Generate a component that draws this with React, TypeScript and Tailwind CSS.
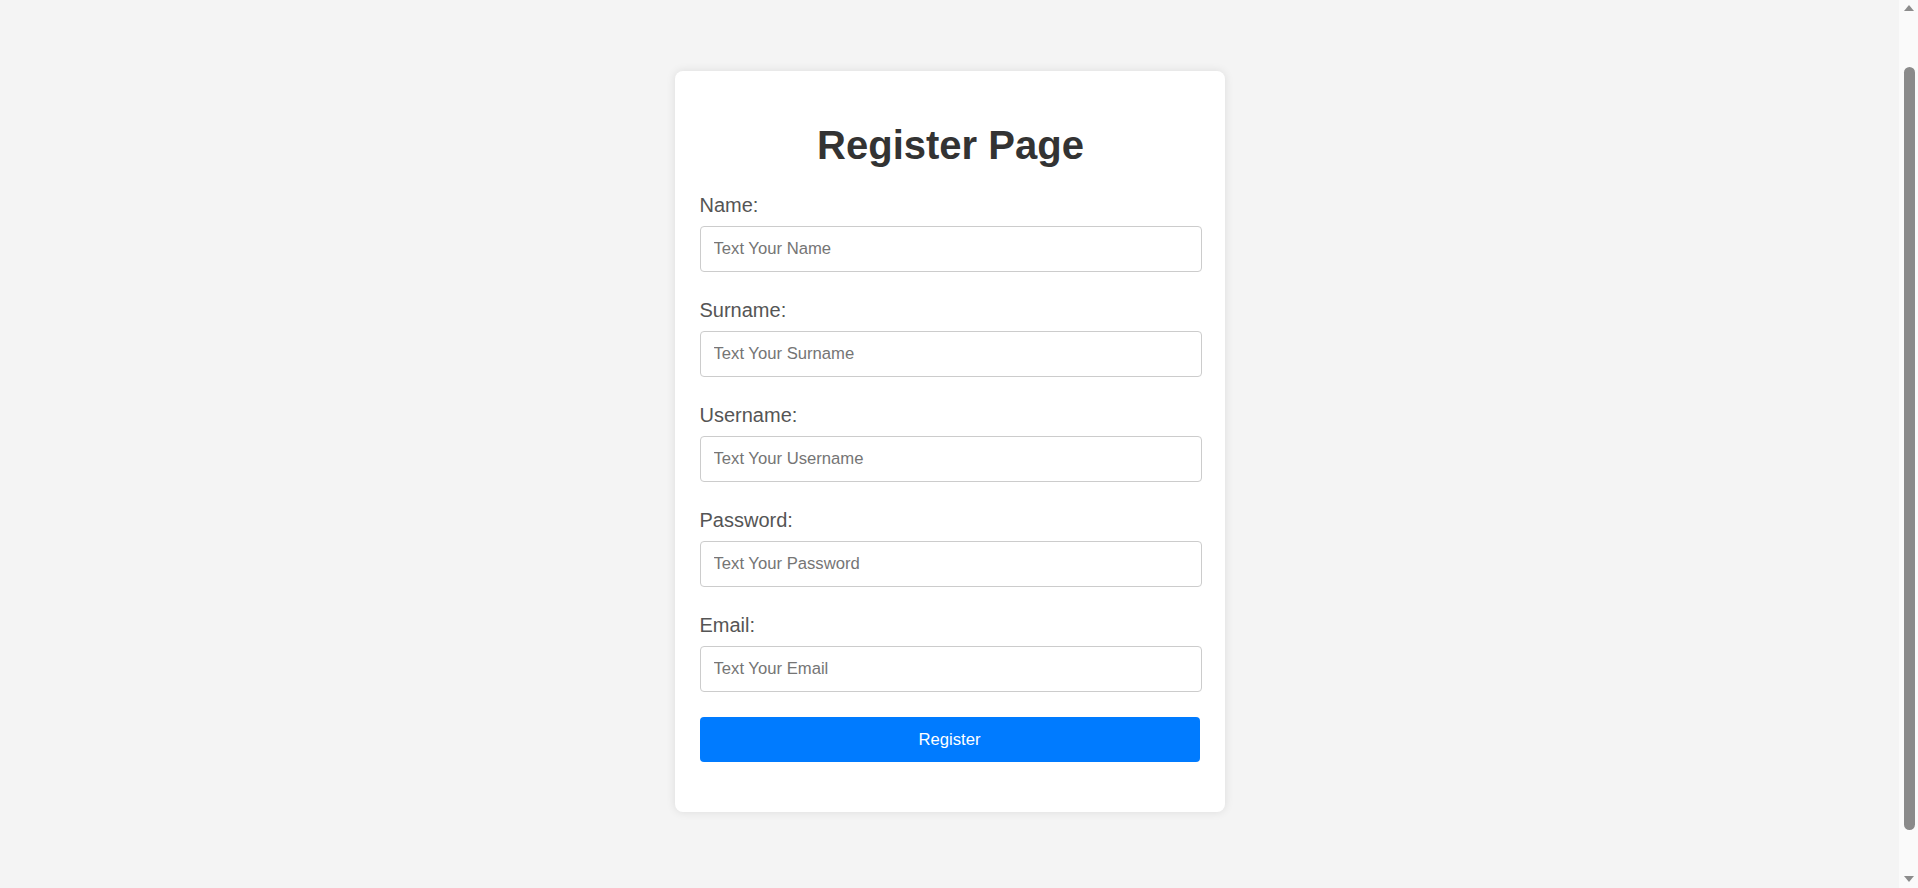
import React from "react";

const fields = [
  { label: "Name:", placeholder: "Text Your Name", type: "text" },
  { label: "Surname:", placeholder: "Text Your Surname", type: "text" },
  { label: "Username:", placeholder: "Text Your Username", type: "text" },
  { label: "Password:", placeholder: "Text Your Password", type: "password" },
  { label: "Email:", placeholder: "Text Your Email", type: "email" },
];

function ScrollBar() {
  return (
    <div className="flex h-full w-[19px] shrink-0 flex-col items-center bg-[#fafafa] pl-[1px]">
      <svg width="12" height="14" viewBox="0 0 12 14" className="mt-[1px] shrink-0">
        <path d="M6 4 L11 10 L1 10 Z" fill="#8c8c8c" />
      </svg>
      <div className="mt-[52px] h-[763px] w-[11px] shrink-0 rounded-full bg-[#8a8a8a]" />
      <div className="flex-1" />
      <svg width="12" height="14" viewBox="0 0 12 14" className="mb-[2px] shrink-0">
        <path d="M1 4 L11 4 L6 10 Z" fill="#8c8c8c" />
      </svg>
    </div>
  );
}

export default function App() {
  return (
    <div
      className="flex h-[888px] w-full overflow-hidden bg-[#f4f4f4]"
      style={{ fontFamily: '"Liberation Sans", Arial, sans-serif' }}
    >
      <main className="flex-1 pt-[71px]">
        <div className="mx-auto w-[550px] rounded-lg bg-white pl-[25px] pr-[23px] pt-[52px] pb-[50px] shadow-[0_0_10px_rgba(0,0,0,0.1)]">
          <h1 className="mb-[27px] h-[44px] text-center text-[40px] font-bold leading-[44px] text-[#333333]">
            Register Page
          </h1>
          <form onSubmit={(e) => e.preventDefault()}>
            {fields.map((f, i) => (
              <div
                key={f.label}
                className={i === fields.length - 1 ? "mb-[25px]" : "mb-[27px]"}
              >
                <label className="mb-[10px] block h-[22px] text-[20px] leading-[22px] text-[#555555]">
                  {f.label}
                </label>
                <input
                  type={f.type}
                  placeholder={f.placeholder}
                  className="box-border block h-[46px] w-[502px] rounded-[4px] border border-[#cccccc] bg-white px-[13px] text-[16.67px] text-[#333] outline-none placeholder:text-[#757575]"
                />
              </div>
            ))}
            <button
              type="submit"
              className="block h-[45px] w-[500px] rounded-[4px] bg-[#007bff] text-[16.67px] text-white"
            >
              Register
            </button>
          </form>
        </div>
      </main>
      <ScrollBar />
    </div>
  );
}
